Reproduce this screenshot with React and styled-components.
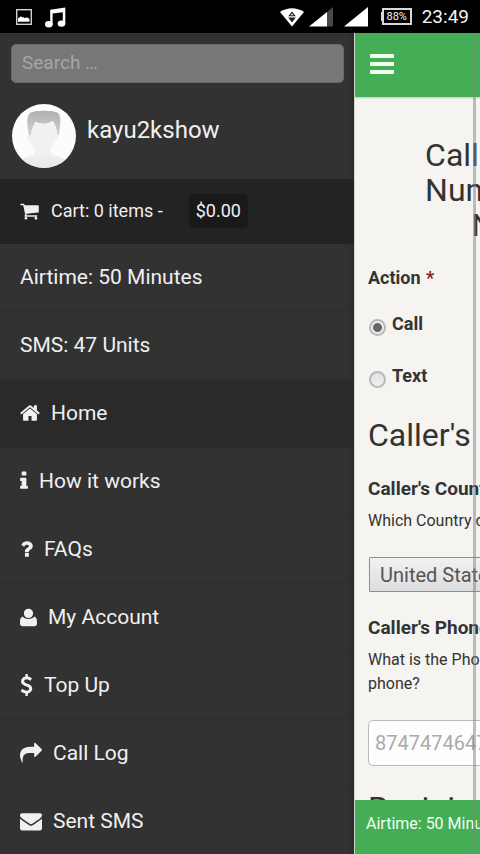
import React, { useState } from 'react';
import styled, { createGlobalStyle } from 'styled-components';

const GlobalStyle = createGlobalStyle`
  *, *::before, *::after {
    box-sizing: border-box;
  }

  body {
    margin: 0;
    background: #323232;
    font-family: Roboto, 'Liberation Sans', sans-serif;
  }

  button, input, select {
    font-family: inherit;
  }
`;

const ICONS = {
  cart: {
    box: '64 0 1664 1792',
    path: 'M704 1536q0 52-38 90t-90 38-90-38-38-90 38-90 90-38 90 38 38 90zm896 0q0 52-38 90t-90 38-90-38-38-90 38-90 90-38 90 38 38 90zm128-1088v512q0 24-16.5 42.5t-40.5 21.5l-1044 122q13 60 13 70 0 16-24 64h920q26 0 45 19t19 45-19 45-45 19h-1024q-26 0-45-19t-19-45q0-11 8-31.5t16-36 21.5-40 15.5-29.5l-177-823h-204q-26 0-45-19t-19-45 19-45 45-19h256q16 0 28.5 6.5t19.5 15.5 13 24.5 8 26 5.5 29.5 4.5 26h1201q26 0 45 19t19 45z',
  },
  home: {
    box: '64 0 1664 1792',
    path: 'M1472 992v480q0 26-19 45t-45 19h-384v-384h-256v384h-384q-26 0-45-19t-19-45v-480q0-1 .5-3t.5-3l575-474 575 474q1 2 1 6zm223-69l-62 74q-8 9-21 11h-3q-13 0-21-7l-692-577-692 577q-12 8-24 7-13-2-21-11l-62-74q-8-10-7-23.5t11-21.5l719-599q32-26 76-26t76 26l244 204v-195q0-14 9-23t23-9h192q14 0 23 9t9 23v408l219 182q10 8 11 21.5t-7 23.5z',
  },
  info: {
    box: '576 0 640 1792',
    path: 'M1216 1344v128q0 26-19 45t-45 19h-512q-26 0-45-19t-19-45v-128q0-26 19-45t45-19h64v-384h-64q-26 0-45-19t-19-45v-128q0-26 19-45t45-19h384q26 0 45 19t19 45v576h64q26 0 45 19t19 45zm-128-1152v192q0 26-19 45t-45 19h-256q-26 0-45-19t-19-45v-192q0-26 19-45t45-19h256q26 0 45 19t19 45z',
  },
  question: {
    box: '384 0 1024 1792',
    path: 'M1088 1256v240q0 16-12 28t-28 12h-240q-16 0-28-12t-12-28v-240q0-16 12-28t28-12h240q16 0 28 12t12 28zm316-600q0 54-15.5 101t-35 76.5-55 59.5-57.5 43.5-61 35.5q-41 23-68.5 65t-27.5 67q0 17-12 32.5t-28 15.5h-240q-15 0-25.5-18.5t-10.5-37.5v-45q0-83 65-156.5t143-108.5q59-27 84-56t25-76q0-42-46.5-74t-107.5-32q-65 0-108 29-35 25-107 115-13 16-31 16-12 0-25-8l-164-125q-13-10-15.5-25t5.5-28q160-266 464-266 80 0 161 31t146 83 106 127.5 41 158.5z',
  },
  user: {
    box: '192 0 1408 1792',
    path: 'M420 860Q540 1060 896 1060T1372 860Q1600 930 1600 1300V1460Q1600 1660 1400 1660H392Q192 1660 192 1460V1300Q192 930 420 860ZM896 220C1110 220 1280 380 1280 600S1110 980 896 980 512 820 512 600 682 220 896 220Z',
  },
  dollar: {
    box: '384 0 1024 1792',
    path: 'M1362 1185q0 153-99.5 263.5t-258.5 136.5v175q0 14-9 23t-23 9h-135q-13 0-22.5-9.5t-9.5-22.5v-175q-66-9-127.5-31t-101.5-44.5-74-48-46.5-37.5-17.5-18q-17-21-2-41l103-135q7-10 23-12 15-2 24 9l2 2q113 99 243 125 37 8 74 8 81 0 142.5-43t61.5-122q0-28-15-53t-33.5-42-58.5-37.5-66-32-80-32.5q-39-16-61.5-25t-61.5-26.5-62.5-31-56.5-35.5-53.5-42.5-43.5-49-35.5-58-21-66.5-8.5-78q0-138 98-242t255-134v-180q0-13 9.5-22.5t22.5-9.5h135q14 0 23 9t9 23v176q57 6 110.5 23t87 33.5 63.5 37.5 39 29 15 14q17 18 5 38l-81 146q-8 15-23 16-14 3-27-7-3-3-14.5-12t-39-26.5-58.5-32-74.5-26-85.5-11.5q-95 0-155 43t-60 111q0 26 8.5 48t29.5 41.5 39.5 33 56 31 60.5 27 70 27.5q53 20 81 31.5t76 35 75.5 42.5 62 50 53 63.5 31.5 76.5 13 94z',
  },
  share: {
    box: '0 0 1792 1792',
    path: 'M1792 640q0 26-19 45l-512 512q-19 19-45 19t-45-19-19-45v-256h-224q-98 0-175.5 6t-154 21.5-133 42.5-105.5 69.5-80 101-48.5 138.5-17.5 181q0 55 5 123 0 6 2.5 23.5t2.5 26.5q0 15-8.5 25t-23.5 10q-16 0-28-17-7-9-13-22t-13.5-30-10.5-24q-127-285-127-451 0-199 53-333 162-403 875-403h224v-256q0-26 19-45t45-19 45 19l512 512q19 19 19 45z',
  },
  envelope: {
    box: '0 0 1792 1792',
    path: 'M1792 710v794q0 66-47 113t-113 47h-1472q-66 0-113-47t-47-113v-794q44 49 101 87 362 246 497 345 57 42 92.5 65.5t94.5 48 110 24.5h2q51 0 110-24.5t94.5-48 92.5-65.5q170-123 498-345 57-39 100-87zm0-294q0 79-49 151t-122 123q-376 261-468 325-10 7-42.5 31t-54 38.5-52 32.5-57.5 27-50 9h-2q-23 0-50-9t-57.5-27-52-32.5-54-38.5-42.5-31q-91-64-262-182.5t-205-142.5q-62-42-117-115.5t-55-136.5q0-78 41.5-130t118.5-52h1472q65 0 112.5 47t47.5 113z',
  },
};

const MENU = [
  { label: 'Airtime: 50 Minutes' },
  { label: 'SMS: 47 Units' },
  { label: 'Home', icon: 'home', width: 20, active: true },
  { label: 'How it works', icon: 'info', width: 8 },
  { label: 'FAQs', icon: 'question', width: 13 },
  { label: 'My Account', icon: 'user', width: 17 },
  { label: 'Top Up', icon: 'dollar', width: 13 },
  { label: 'Call Log', icon: 'share', width: 22 },
  { label: 'Sent SMS', icon: 'envelope', width: 22 },
];

const Screen = styled.div`
  display: flex;
  flex-direction: column;
  height: 100vh;
  overflow: hidden;
`;

const StatusBar = styled.header`
  display: flex;
  flex: none;
  align-items: center;
  justify-content: space-between;
  height: 33px;
  padding: 0 11px 0 15px;
  background: #000;
  color: #f4f4f4;
`;

const StatusGroup = styled.div`
  display: flex;
  align-items: center;
  gap: 10px;

  svg {
    display: block;
  }
`;

const Battery = styled.span`
  display: flex;
  align-items: center;
  justify-content: center;
  width: 30px;
  height: 17px;
  margin-left: 4px;
  border: 2px solid #d8d8d8;
  font-size: 11px;
  line-height: 11px;

  &::before {
    content: '';
    flex: none;
    width: 2px;
    height: 9px;
    margin-left: -5px;
    margin-right: 3px;
    background: #d8d8d8;
  }
`;

const Clock = styled.time`
  font-size: 19px;
  line-height: 24px;
`;

const Body = styled.div`
  display: flex;
  flex: 1;
  min-height: 0;
`;

const Drawer = styled.aside`
  flex: 0 0 354px;
  overflow: hidden;
  background: #323232;
  box-shadow: inset -6px 0 6px -6px rgba(0, 0, 0, 0.3);
  color: #f0f0f0;
`;

const SearchForm = styled.form`
  padding: 11px 10px 0 11px;
`;

const SearchInput = styled.input`
  display: block;
  width: 100%;
  height: 39px;
  padding: 0 10px 2px;
  border: 1px solid #696969;
  border-radius: 5px;
  background: #777;
  color: #fff;
  font-size: 19px;

  &::placeholder {
    color: #a6a6a6;
    opacity: 1;
  }
`;

const Profile = styled.div`
  display: flex;
  gap: 11px;
  height: 96px;
  padding: 21px 12px 0;
`;

const Avatar = styled.svg`
  flex: none;
  width: 64px;
  height: 64px;
`;

const UserName = styled.span`
  padding-top: 12px;
  font-size: 24px;
  line-height: 28px;
`;

const CartLink = styled.a`
  display: flex;
  align-items: center;
  height: 65px;
  padding: 0 20px 2px;
  background: #232323;
  color: inherit;
  font-size: 18px;
  text-decoration: none;
`;

const CartText = styled.span`
  margin: 0 26px 0 12px;
`;

const CartTotal = styled.span`
  padding: 0 7px;
  border-radius: 5px;
  background: #191919;
  line-height: 34px;
`;

const MenuList = styled.ul`
  margin: 0;
  padding: 0;
  list-style: none;
`;

const MenuLink = styled.a`
  display: flex;
  align-items: center;
  gap: 11px;
  height: 68px;
  padding: 0 20px 2px;
  border-bottom: 1px solid #2d2d2d;
  background: ${({ $active }) => ($active ? '#2a2a2a' : 'transparent')};
  color: inherit;
  font-size: 21px;
  text-decoration: none;
`;

const Glyph = styled.svg`
  flex: none;
  fill: currentColor;
`;

const Viewport = styled.div`
  position: relative;
  flex: 1;
  min-width: 0;
  overflow: hidden;
  border-left: 1px solid #d5d5d0;
  background: #f5f4f0;
`;

const Page = styled.div`
  display: flex;
  flex-direction: column;
  width: 100vw;
  height: 100%;
  color: #333;
`;

const TopBar = styled.div`
  flex: none;
  height: 64px;
  padding: 20px 15px;
  background: #44ae56;
  box-shadow: 0 1px 2px rgba(0, 0, 0, 0.2);
`;

const MenuButton = styled.button`
  display: flex;
  flex-direction: column;
  gap: 4px;
  width: 24px;
  padding: 1px 0;
  border: 0;
  background: none;
`;

const Bar = styled.span`
  width: 100%;
  height: 4px;
  border-radius: 1px;
  background: #f1fff1;
`;

const Content = styled.main`
  flex: 1;
  min-height: 0;
  padding: 41px 13px 0;
  overflow: hidden;
`;

const Title = styled.h1`
  margin: 0 0 23px;
  font-size: 32px;
  font-weight: 400;
  line-height: 35px;
  text-align: center;
`;

const Heading = styled.h2`
  margin: 0;
  font-size: 32px;
  font-weight: 400;
  line-height: 36px;
`;

const Group = styled.fieldset`
  margin: 0 0 29px;
  padding: 0;
  border: 0;
`;

const Legend = styled.legend`
  padding: 0;
  margin-bottom: 22px;
  font-size: 18px;
  font-weight: 700;
  line-height: 24px;
`;

const Required = styled.span`
  margin-left: 1px;
  color: #8a1f1f;
`;

const Choice = styled.label`
  display: flex;
  gap: 6px;
  height: 24px;
  font-size: 18px;
  font-weight: 700;
  line-height: 24px;

  & + & {
    margin-top: 28px;
  }
`;

const Radio = styled.input`
  align-self: flex-end;
  appearance: none;
  width: 17px;
  height: 17px;
  margin: 0 0 0 1px;
  border: 2px solid #b9b9b9;
  border-radius: 50%;
  background: linear-gradient(#e2e2e2, #f0f0f0);

  &:checked {
    background: radial-gradient(circle, #666 0 4px, #eee 5px);
  }
`;

const Field = styled.div`
  display: flex;
  flex-direction: column;
  align-items: flex-start;
  padding-top: 24px;
`;

const FieldLabel = styled.label`
  font-size: 19px;
  font-weight: 700;
  line-height: 24px;
`;

const Hint = styled.span`
  max-width: 260px;
  padding: 8px 0 24px;
  font-size: 16px;
  line-height: 24px;
`;

const CountrySelect = styled.select`
  width: 260px;
  height: 35px;
  margin-left: 1px;
  padding: 0 10px;
  appearance: none;
  border: 1px solid #8c8c8c;
  border-radius: 1px;
  background: linear-gradient(#f2f2f2, #dcdcdf);
  color: #555;
  font-size: 20px;
`;

const PhoneInput = styled.input`
  width: 260px;
  height: 46px;
  padding: 0 6px;
  border: 1px solid #bbb;
  border-radius: 5px;
  background: #fdfdfd;
  color: #333;
  font-size: 20px;

  &::placeholder {
    color: #aaa;
    opacity: 1;
  }
`;

const Recipient = styled.div`
  padding-top: 24px;
`;

const Footer = styled.footer`
  flex: none;
  height: 54px;
  padding: 12px 11px;
  background: #44ae56;
  color: #f1fff1;
  font-size: 16px;
  line-height: 24px;
`;

const ScrollThumb = styled.div`
  position: absolute;
  top: 0;
  right: 4px;
  bottom: 0;
  width: 3px;
  background: rgba(128, 128, 128, 0.5);
`;

function Icon({ name, width, height = 22 }) {
  return (
    <Glyph
      viewBox={ICONS[name].box}
      width={width}
      height={height}
      aria-hidden="true"
    >
      <path d={ICONS[name].path} />
    </Glyph>
  );
}

function StatusIcons() {
  return (
    <StatusGroup>
      <svg width="18" height="18" viewBox="0 0 18 18">
        <rect x="1.7" y="1.7" width="14.6" height="14.6" fill="none" stroke="#cfcfcf" strokeWidth="1.4" />
        <path d="M3 13.800V10.500l1.600-1.300 1.300-1 1.400 1.400L8.600 9l1.300 1.200 2-.9 2.600 1.800v2.700z" fill="#fff" />
      </svg>
      <svg width="24" height="24" viewBox="0 0 24 24" fill="#fff">
        <path d="M7.200 4.800 22.300 2.500V19H19.800V7.200L9.600 8.600V20H7.200z" />
        <ellipse cx="5.800" cy="19.200" rx="3.800" ry="3.200" />
        <ellipse cx="18.500" cy="18.600" rx="3.800" ry="3.200" />
      </svg>
    </StatusGroup>
  );
}

function SignalIcons() {
  return (
    <svg width="88" height="22" viewBox="0 0 88 22">
      <path d="M0 6Q12-1.500 24 6L12 20.500z" fill="#fff" />
      <path d="M12 5.500l3.800 4.700H8.200zM12 16.500l-3.800-5h7.600z" fill="#222" />
      <path d="M12 7.500l1.500 1.800h-3z" fill="#fff" />
      <path d="M47 20.500V6L29 20.500z" fill="#fff" />
      <path d="M47 20.500V6L53 1V20.500z" fill="#484848" />
      <path d="M64 20.500H88V1z" fill="#fff" />
    </svg>
  );
}

function ProfilePicture() {
  return (
    <Avatar viewBox="0 0 64 64" role="img" aria-label="kayu2kshow">
      <defs>
        <clipPath id="round">
          <circle cx="32" cy="32" r="32" />
        </clipPath>
        <linearGradient id="hair" x1="0" y1="0" x2="0" y2="1">
          <stop offset="0" stopColor="#b0b0b0" />
          <stop offset="1" stopColor="#d2d2d2" />
        </linearGradient>
        <linearGradient id="shirt" x1="0" y1="0" x2="0" y2="1">
          <stop offset="0" stopColor="#f2f4f4" />
          <stop offset="1" stopColor="#e2e7e9" />
        </linearGradient>
      </defs>
      <g clipPath="url(#round)">
        <rect width="64" height="64" fill="#fcfcfc" />
        <path d="M6 64c1-9 7-11 15-13l3-5h14l3 5c8 2 15 4 16 13z" fill="url(#shirt)" />
        <path d="M17 31c-3-1-2 7 2 7 2 7 7 11 12 11s9-4 11-11c4 0 5-8 2-7l-1-12H18z" fill="#f1f1f0" />
        <path d="M17 31c-2-9-3-18 1-22 4-3 24-3 28 0 4 4 2 14 1 22h-2c0-5-1-9-4-14-5 3-12 3-18 1-2 4-4 8-4 13z" fill="url(#hair)" />
      </g>
    </Avatar>
  );
}

function SideMenu() {
  return (
    <Drawer>
      <SearchForm role="search">
        <SearchInput type="search" placeholder="Search …" aria-label="Search" />
      </SearchForm>
      <Profile>
        <ProfilePicture />
        <UserName>kayu2kshow</UserName>
      </Profile>
      <CartLink href="#cart">
        <Icon name="cart" width={19} height={20} />
        <CartText>Cart: 0 items -</CartText>
        <CartTotal>$0.00</CartTotal>
      </CartLink>
      <nav>
        <MenuList>
          {MENU.map((item) => (
            <li key={item.label}>
              <MenuLink href="#" $active={item.active}>
                {item.icon && <Icon name={item.icon} width={item.width} />}
                {item.label}
              </MenuLink>
            </li>
          ))}
        </MenuList>
      </nav>
    </Drawer>
  );
}

function CallForm() {
  const [action, setAction] = useState('call');

  return (
    <Content>
      <Title>
        Call and Text any Phone
        <br />
        Number Worldwide with
        <br />
        No Extra Charges
      </Title>
      <Group>
        <Legend>
          Action <Required>*</Required>
        </Legend>
        <Choice>
          <Radio
            type="radio"
            name="action"
            checked={action === 'call'}
            onChange={() => setAction('call')}
          />
          Call
        </Choice>
        <Choice>
          <Radio
            type="radio"
            name="action"
            checked={action === 'text'}
            onChange={() => setAction('text')}
          />
          Text
        </Choice>
      </Group>
      <Heading>Caller's Details</Heading>
      <Field>
        <FieldLabel htmlFor="country">Caller's Country</FieldLabel>
        <Hint>Which Country do you call?</Hint>
        <CountrySelect id="country">
          <option>United States</option>
        </CountrySelect>
      </Field>
      <Field>
        <FieldLabel htmlFor="phone">Caller's Phone</FieldLabel>
        <Hint>What is the Phone Number of your phone?</Hint>
        <PhoneInput id="phone" type="tel" placeholder="8747474647" />
      </Field>
      <Recipient>
        <Heading>Recipient</Heading>
      </Recipient>
    </Content>
  );
}

function App() {
  return (
    <Screen>
      <GlobalStyle />
      <StatusBar>
        <StatusIcons />
        <StatusGroup>
          <SignalIcons />
          <Battery>88%</Battery>
          <Clock>23:49</Clock>
        </StatusGroup>
      </StatusBar>
      <Body>
        <SideMenu />
        <Viewport>
          <Page>
            <TopBar>
              <MenuButton type="button" aria-label="Menu">
                <Bar />
                <Bar />
                <Bar />
              </MenuButton>
            </TopBar>
            <CallForm />
            <Footer>Airtime: 50 Minutes</Footer>
          </Page>
          <ScrollThumb />
        </Viewport>
      </Body>
    </Screen>
  );
}

export default App;
